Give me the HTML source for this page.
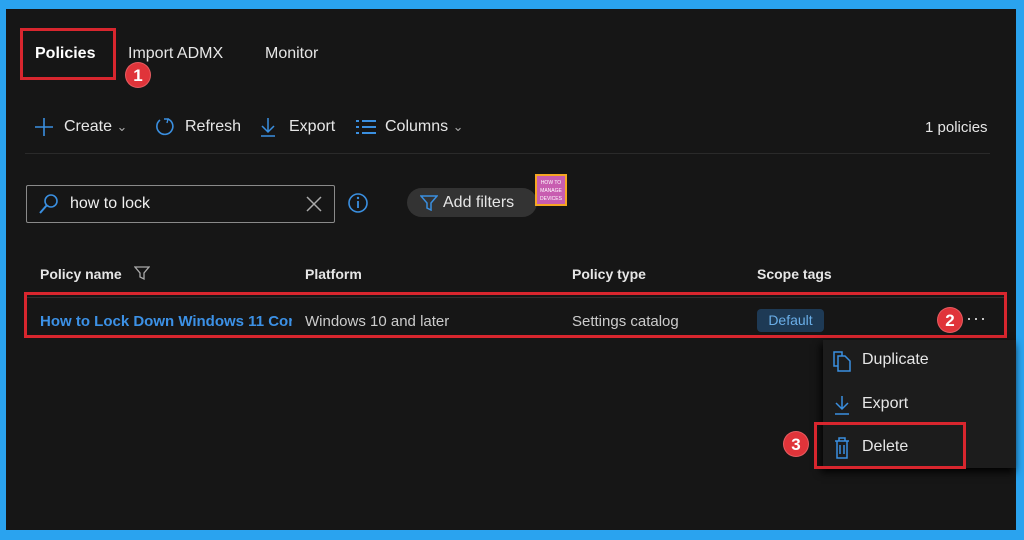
<!DOCTYPE html>
<html><head><meta charset="utf-8"><style>
*{margin:0;padding:0;box-sizing:border-box}
body{width:1024px;height:540px;background:#2aa3ef;position:relative;overflow:hidden;font-family:"Liberation Sans",sans-serif;color:#e6e6e6}
#p{position:absolute;left:6px;top:9px;width:1010px;height:521px;background:#161616}
.a{position:absolute;white-space:nowrap}
.red{position:absolute;border:3px solid #d8262e}
.badge{position:absolute;width:26px;height:26px;border-radius:50%;background:#e0343a;color:#fff;font-size:17px;font-weight:bold;text-align:center;line-height:26px;border:1px solid #fff3}
.blue{color:#3a8fe0}
</style></head><body><div id="p"></div>
<div class="a" style="left:35px;top:45px;font-size:16px;font-weight:bold;color:#fff">Policies</div>
<div class="red" style="left:20px;top:28px;width:96px;height:52px"></div>
<div class="a" style="left:128px;top:45px;font-size:16px">Import ADMX</div>
<div class="a" style="left:265px;top:45px;font-size:16px">Monitor</div>
<div class="badge" style="left:125px;top:62px">1</div>

<svg class="a" style="left:34px;top:117px" width="20" height="20"><path d="M10 1V19M1 10H19" stroke="#3a8fe0" stroke-width="1.6"/></svg>
<div class="a" style="left:64px;top:118px;font-size:16px">Create <span style="color:#aaa;font-size:13px">&#8964;</span></div>
<svg class="a" style="left:154px;top:116px" width="22" height="22"><path d="M6 4A8 8 0 1 0 14 3" fill="none" stroke="#3a8fe0" stroke-width="1.6"/><path d="M10 3L14 3 13 7" fill="none" stroke="#3a8fe0" stroke-width="1.4"/></svg>
<div class="a" style="left:185px;top:118px;font-size:16px">Refresh</div>
<svg class="a" style="left:259px;top:116px" width="18" height="22"><path d="M9 2V15M3 10L9 16 15 10M2 20H16" fill="none" stroke="#3a8fe0" stroke-width="1.5"/></svg>
<div class="a" style="left:289px;top:118px;font-size:16px">Export</div>
<svg class="a" style="left:355px;top:118px" width="22" height="18"><path d="M1 3H4M1 9H4M1 15H4M7 3H21M7 9H21M7 15H21" stroke="#3a8fe0" stroke-width="2"/></svg>
<div class="a" style="left:385px;top:118px;font-size:16px">Columns <span style="color:#aaa;font-size:13px">&#8964;</span></div>
<div class="a" style="left:925px;top:119px;font-size:15px">1 policies</div>
<div class="a" style="left:25px;top:153px;width:965px;height:1px;background:#2a2a2a"></div>

<div class="a" style="left:26px;top:185px;width:309px;height:38px;border:1px solid #8a8a8a;border-radius:2px"></div>
<svg class="a" style="left:38px;top:193px" width="22" height="22"><circle cx="13" cy="8" r="6" fill="none" stroke="#3a8fe0" stroke-width="1.6"/><path d="M9 12L2 20" stroke="#3a8fe0" stroke-width="2"/></svg>
<div class="a" style="left:70px;top:195px;font-size:16px;color:#f0f0f0">how to lock</div>
<svg class="a" style="left:305px;top:195px" width="18" height="18"><path d="M2 2L16 16M16 2L2 16" stroke="#aaa" stroke-width="1.5"/></svg>
<svg class="a" style="left:347px;top:192px" width="22" height="22"><circle cx="11" cy="11" r="9" fill="none" stroke="#3a8fe0" stroke-width="1.6"/><path d="M11 9V16" stroke="#3a8fe0" stroke-width="1.8"/><circle cx="11" cy="6" r="1.2" fill="#3a8fe0"/></svg>
<div class="a" style="left:407px;top:188px;width:130px;height:29px;border-radius:15px;background:#333"></div>
<svg class="a" style="left:420px;top:195px" width="18" height="16"><path d="M1 1H17L11 8V15L7 13V8Z" fill="none" stroke="#3a8fe0" stroke-width="1.5"/></svg>
<div class="a" style="left:443px;top:194px;font-size:16px">Add filters</div>
<div class="a" style="left:535px;top:174px;width:32px;height:32px;background:#c85db0;border:2px solid #f5a623;font-size:5px;color:#fff;text-align:center;line-height:8px;padding-top:3px">HOW TO<br>MANAGE<br>DEVICES</div>

<div class="a" style="left:40px;top:266px;font-size:14px;font-weight:bold">Policy name</div>
<svg class="a" style="left:134px;top:266px" width="16" height="15"><path d="M1 1H15L10 7V13L6 11V7Z" fill="none" stroke="#aaa" stroke-width="1.3"/></svg>
<div class="a" style="left:305px;top:266px;font-size:14px;font-weight:bold">Platform</div>
<div class="a" style="left:572px;top:266px;font-size:14px;font-weight:bold">Policy type</div>
<div class="a" style="left:757px;top:266px;font-size:14px;font-weight:bold">Scope tags</div>
<div class="a" style="left:25px;top:297px;width:980px;height:1px;background:#2f2f2f"></div>
<div class="red" style="left:24px;top:292px;width:983px;height:46px"></div>
<div class="a blue" style="left:40px;top:313px;font-size:15px;font-weight:bold;color:#3c91e6;width:252px;overflow:hidden">How to Lock Down Windows 11 Corporate</div>
<div class="a" style="left:305px;top:313px;font-size:15px;color:#ccc">Windows 10 and later</div>
<div class="a" style="left:572px;top:313px;font-size:15px;color:#ccc">Settings catalog</div>
<div class="a" style="left:757px;top:309px;width:67px;height:23px;background:#1e3a55;border-radius:4px;color:#6aaee8;font-size:14px;text-align:center;line-height:23px">Default</div>
<div class="badge" style="left:937px;top:307px">2</div>
<div class="a" style="left:966px;top:308px;font-size:18px;color:#ddd;letter-spacing:1px">···</div>

<div class="a" style="left:823px;top:340px;width:193px;height:128px;background:#1c1c1c;box-shadow:-2px 4px 8px #000"></div>
<svg class="a" style="left:832px;top:350px" width="20" height="22"><path d="M2 2H10V16H2Z" fill="none" stroke="#3a8fe0" stroke-width="1.5"/><path d="M6 6H13L18 11V21H6Z" fill="#1c1c1c" stroke="#3a8fe0" stroke-width="1.5"/></svg>
<div class="a" style="left:862px;top:351px;font-size:16px">Duplicate</div>
<svg class="a" style="left:834px;top:394px" width="16" height="22"><path d="M8 2V15M2 9L8 15 14 9M1 20H15" fill="none" stroke="#3a8fe0" stroke-width="1.5"/></svg>
<div class="a" style="left:862px;top:395px;font-size:16px">Export</div>
<svg class="a" style="left:834px;top:437px" width="16" height="22"><path d="M1 4H15M5 4V1H11V4M3 4V21H13V4M6 8V17M10 8V17" fill="none" stroke="#3a8fe0" stroke-width="1.5"/></svg>
<div class="a" style="left:862px;top:438px;font-size:16px">Delete</div>
<div class="red" style="left:814px;top:422px;width:152px;height:47px"></div>
<div class="badge" style="left:783px;top:431px">3</div>
</body></html>
